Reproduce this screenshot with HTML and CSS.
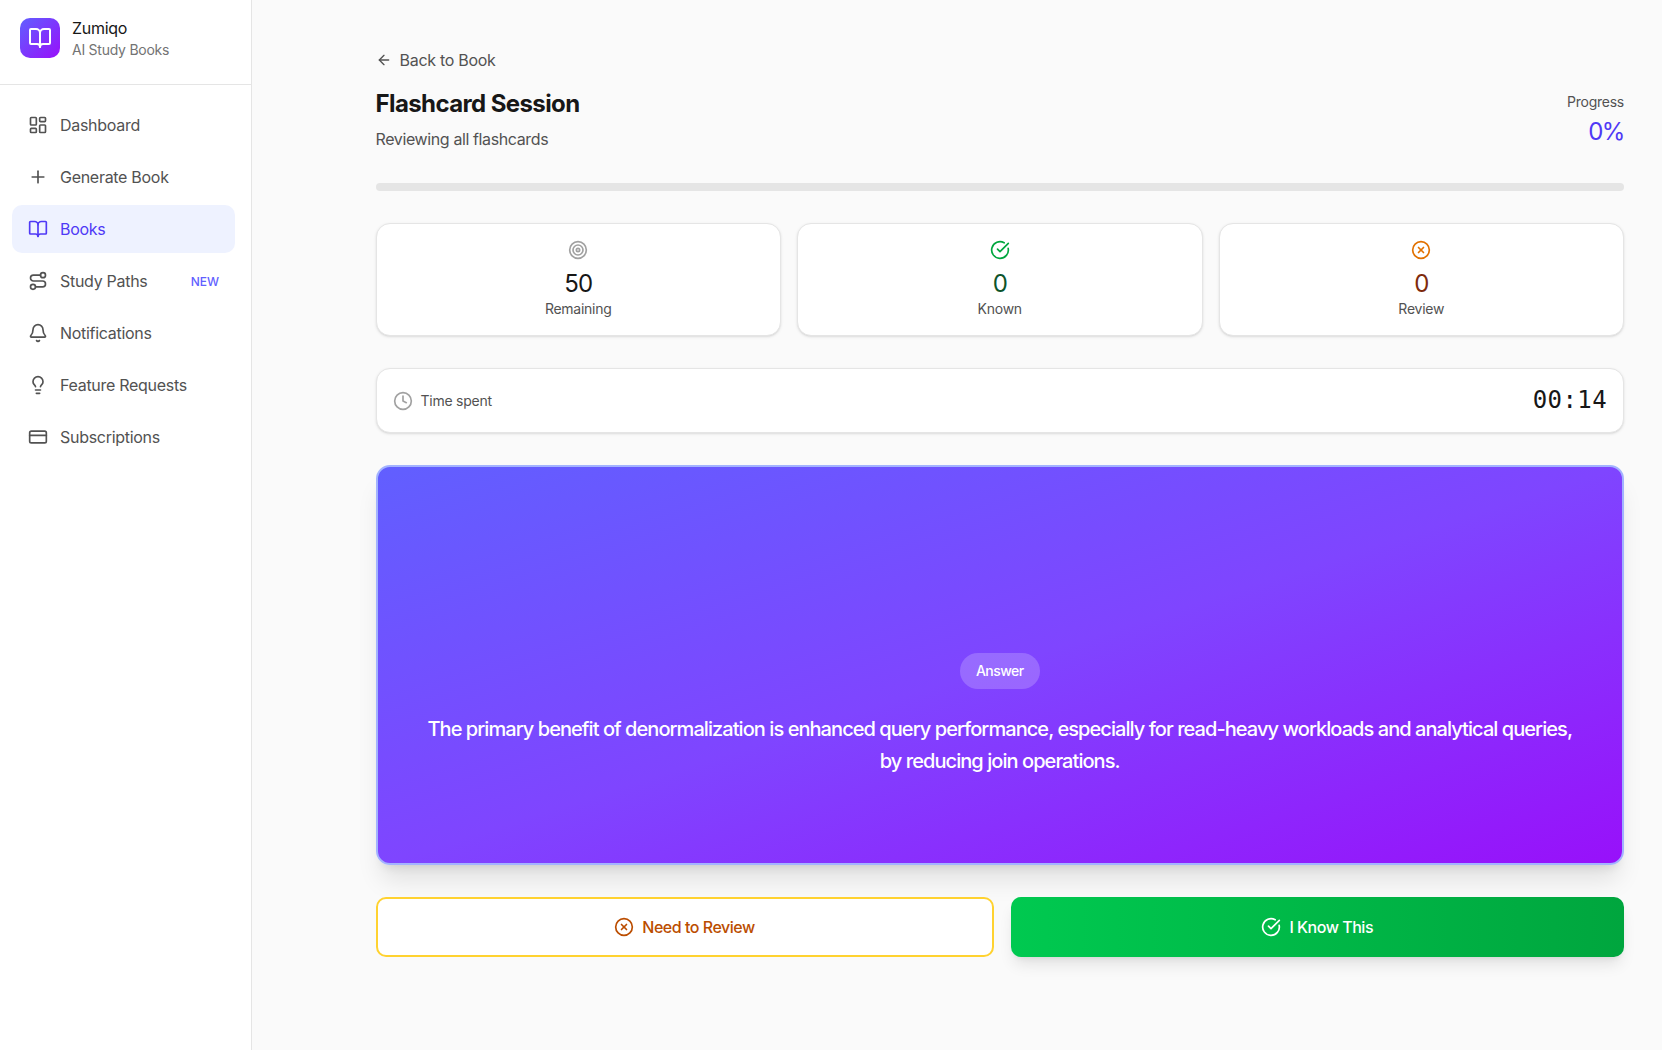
FILE: index.html
```html
<!DOCTYPE html>
<html lang="en">
<head>
    <meta charset="UTF-8">
    <meta name="viewport" content="width=device-width, initial-scale=1.0">
    <title>Flashcard Session | Zumiqo</title>
    <link rel="stylesheet" href="styles.css">
</head>
<body>
    <div class="app">
        <aside class="sidebar">
            <div class="brand">
                <div class="brand-logo">
                    <svg class="icon icon-logo" viewBox="0 0 24 24"><path d="M12 7v14"/><path d="M3 18a1 1 0 0 1-1-1V4a1 1 0 0 1 1-1h5a4 4 0 0 1 4 4 4 4 0 0 1 4-4h5a1 1 0 0 1 1 1v13a1 1 0 0 1-1 1h-6a3 3 0 0 0-3 3 3 3 0 0 0-3-3z"/></svg>
                </div>
                <div>
                    <div class="brand-name">Zumiqo</div>
                    <div class="brand-sub">AI Study Books</div>
                </div>
            </div>
            <nav class="nav">
                <a class="nav-item">
                    <svg class="icon" viewBox="0 0 24 24"><rect x="3" y="3" width="7" height="9" rx="1"/><rect x="14" y="3" width="7" height="5" rx="1"/><rect x="14" y="12" width="7" height="9" rx="1"/><rect x="3" y="16" width="7" height="5" rx="1"/></svg>
                    <span>Dashboard</span>
                </a>
                <a class="nav-item">
                    <svg class="icon" viewBox="0 0 24 24"><path d="M5 12h14"/><path d="M12 5v14"/></svg>
                    <span>Generate Book</span>
                </a>
                <a class="nav-item active">
                    <svg class="icon" viewBox="0 0 24 24"><path d="M12 7v14"/><path d="M3 18a1 1 0 0 1-1-1V4a1 1 0 0 1 1-1h5a4 4 0 0 1 4 4 4 4 0 0 1 4-4h5a1 1 0 0 1 1 1v13a1 1 0 0 1-1 1h-6a3 3 0 0 0-3 3 3 3 0 0 0-3-3z"/></svg>
                    <span>Books</span>
                </a>
                <a class="nav-item">
                    <svg class="icon" viewBox="0 0 24 24"><circle cx="6" cy="19" r="3"/><path d="M9 19h8.5a3.5 3.5 0 0 0 0-7h-11a3.5 3.5 0 0 1 0-7H15"/><circle cx="18" cy="5" r="3"/></svg>
                    <span>Study Paths</span>
                    <span class="nav-badge">NEW</span>
                </a>
                <a class="nav-item">
                    <svg class="icon" viewBox="0 0 24 24"><path d="M10.268 21a2 2 0 0 0 3.464 0"/><path d="M3.262 15.326A1 1 0 0 0 4 17h16a1 1 0 0 0 .74-1.673C19.41 13.956 18 12.499 18 8A6 6 0 0 0 6 8c0 4.499-1.411 5.956-2.738 7.326"/></svg>
                    <span>Notifications</span>
                </a>
                <a class="nav-item">
                    <svg class="icon" viewBox="0 0 24 24"><path d="M15 14c.2-1 .7-1.7 1.5-2.5 1-.9 1.5-2.2 1.5-3.5A6 6 0 0 0 6 8c0 1 .2 2.2 1.5 3.5.7.7 1.3 1.5 1.5 2.5"/><path d="M9 18h6"/><path d="M10 22h4"/></svg>
                    <span>Feature Requests</span>
                </a>
                <a class="nav-item">
                    <svg class="icon" viewBox="0 0 24 24"><rect x="2" y="5" width="20" height="14" rx="2"/><path d="M2 10h20"/></svg>
                    <span>Subscriptions</span>
                </a>
            </nav>
        </aside>

        <main class="main">
            <a class="back-link">
                <svg class="icon icon-back" viewBox="0 0 24 24"><path d="m12 19-7-7 7-7"/><path d="M19 12H5"/></svg>
                <span>Back to Book</span>
            </a>

            <div class="session-head">
                <div>
                    <h1>Flashcard Session</h1>
                    <p class="session-sub">Reviewing all flashcards</p>
                </div>
                <div class="progress-info">
                    <div class="progress-label">Progress</div>
                    <div class="progress-value">0%</div>
                </div>
            </div>

            <div class="progress-bar"></div>

            <div class="stats">
                <div class="stat-card">
                    <svg class="icon stat-icon muted" viewBox="0 0 24 24"><circle cx="12" cy="12" r="10"/><circle cx="12" cy="12" r="6"/><circle cx="12" cy="12" r="2"/></svg>
                    <div class="stat-value">50</div>
                    <div class="stat-label">Remaining</div>
                </div>
                <div class="stat-card">
                    <svg class="icon stat-icon green" viewBox="0 0 24 24"><path d="M21.801 10A10 10 0 1 1 17 3.335"/><path d="m9 11 3 3L22 4"/></svg>
                    <div class="stat-value green-dark">0</div>
                    <div class="stat-label">Known</div>
                </div>
                <div class="stat-card">
                    <svg class="icon stat-icon orange" viewBox="0 0 24 24"><circle cx="12" cy="12" r="10"/><path d="m15 9-6 6"/><path d="m9 9 6 6"/></svg>
                    <div class="stat-value orange-dark">0</div>
                    <div class="stat-label">Review</div>
                </div>
            </div>

            <div class="timer-card">
                <div class="timer-left">
                    <svg class="icon timer-icon muted" viewBox="0 0 24 24"><circle cx="12" cy="12" r="10"/><polyline points="12 6 12 12 16 14"/></svg>
                    <span>Time spent</span>
                </div>
                <div class="timer-value">00:14</div>
            </div>

            <div class="flashcard">
                <span class="flashcard-tag">Answer</span>
                <p class="flashcard-text">The primary benefit of denormalization is enhanced query performance, especially for read-heavy workloads and analytical queries, by reducing join operations.</p>
            </div>

            <div class="actions">
                <button class="btn btn-review">
                    <svg class="icon" viewBox="0 0 24 24"><circle cx="12" cy="12" r="10"/><path d="m15 9-6 6"/><path d="m9 9 6 6"/></svg>
                    Need to Review
                </button>
                <button class="btn btn-know">
                    <svg class="icon" viewBox="0 0 24 24"><path d="M21.801 10A10 10 0 1 1 17 3.335"/><path d="m9 11 3 3L22 4"/></svg>
                    I Know This
                </button>
            </div>
        </main>
    </div>
</body>
</html>
```

FILE: styles.css
```css
* {
    margin: 0;
    padding: 0;
    box-sizing: border-box;
    font-family: 'Inter', sans-serif;
    letter-spacing: -0.018em;
}

body {
    background-color: #fafafa;
    color: #171717;
    min-height: 100vh;
}

.app {
    display: flex;
    min-height: 100vh;
}

.icon {
    width: 20px;
    height: 20px;
    flex-shrink: 0;
    fill: none;
    stroke: currentColor;
    stroke-width: 2;
    stroke-linecap: round;
    stroke-linejoin: round;
}

/* sidebar */
.sidebar {
    width: 252px;
    flex-shrink: 0;
    background-color: #fff;
    border-right: 1px solid #e5e5e5;
}

.brand {
    height: 85px;
    display: flex;
    align-items: center;
    gap: 12px;
    padding: 0 20px 9px;
    border-bottom: 1px solid #e5e5e5;
}

.brand-logo {
    width: 40px;
    height: 40px;
    border-radius: 10px;
    display: flex;
    align-items: center;
    justify-content: center;
    color: #fff;
    background: linear-gradient(to bottom right, #615fff 0%, #9810fa 100%);
}

.icon-logo {
    width: 24px;
    height: 24px;
}

.brand-name {
    font-size: 16px;
    line-height: 24px;
}

.brand-sub {
    font-size: 14px;
    line-height: 20px;
    color: #737373;
}

.nav {
    display: flex;
    flex-direction: column;
    gap: 4px;
    padding: 16px 16px 16px 12px;
}

.nav-item {
    height: 48px;
    display: flex;
    align-items: center;
    gap: 12px;
    padding: 0 16px;
    border-radius: 10px;
    font-size: 16px;
    color: #525252;
}

.nav-item.active {
    background-color: #eef2ff;
    color: #4f39f6;
}

.nav-badge {
    margin-left: auto;
    font-size: 12px;
    font-weight: 500;
    letter-spacing: 0;
    color: #615fff;
}

/* main column */
.main {
    flex: 1;
    min-width: 0;
    padding: 48px 38px 48px 123.5px;
}

.back-link {
    display: flex;
    align-items: center;
    gap: 8px;
    font-size: 16px;
    line-height: 24px;
    color: #525252;
    margin-bottom: 16px;
}

.icon-back {
    width: 16px;
    height: 16px;
}

.session-head {
    display: flex;
    justify-content: space-between;
    margin-bottom: 32px;
}

h1 {
    font-size: 24px;
    line-height: 32px;
    font-weight: 700;
    letter-spacing: -0.025em;
    margin-bottom: 7px;
}

.session-sub {
    font-size: 16px;
    line-height: 24px;
    letter-spacing: -0.024em;
    color: #525252;
}

.progress-info {
    padding-top: 4px;
    text-align: right;
}

.progress-label {
    font-size: 14px;
    line-height: 20px;
    color: #525252;
    margin-bottom: 4px;
}

.progress-value {
    font-size: 24px;
    line-height: 32px;
    letter-spacing: -0.06em;
    color: #4f39f6;
}

.progress-bar {
    height: 8px;
    border-radius: 9999px;
    background-color: #e5e5e5;
    margin-bottom: 32px;
}

.stats {
    display: grid;
    grid-template-columns: repeat(3, 1fr);
    gap: 16px;
    margin-bottom: 32px;
}

.stat-card {
    display: flex;
    flex-direction: column;
    align-items: center;
    padding: 16px;
    background-color: #fff;
    border: 1px solid #e5e5e5;
    border-radius: 14px;
    box-shadow: 0 1px 3px rgba(0, 0, 0, 0.1), 0 1px 2px -1px rgba(0, 0, 0, 0.1);
}

.stat-icon {
    margin-bottom: 8px;
}

.muted {
    color: #a1a1a1;
}

.green {
    color: #00a63e;
}

.orange {
    color: #e17100;
}

.stat-value {
    font-size: 24px;
    line-height: 32px;
    letter-spacing: -0.04em;
}

.green-dark {
    color: #0d542b;
}

.orange-dark {
    color: #7e2a0c;
}

.stat-label {
    font-size: 14px;
    line-height: 20px;
    margin-top: -1px;
    color: #525252;
}

.timer-card {
    display: flex;
    align-items: center;
    justify-content: space-between;
    padding: 16px;
    background-color: #fff;
    border: 1px solid #e5e5e5;
    border-radius: 14px;
    box-shadow: 0 1px 3px rgba(0, 0, 0, 0.1), 0 1px 2px -1px rgba(0, 0, 0, 0.1);
    margin-bottom: 32px;
}

.timer-left {
    display: flex;
    align-items: center;
    gap: 8px;
    font-size: 14px;
    color: #525252;
}

.timer-value {
    font-family: 'DejaVu Sans Mono', monospace;
    font-size: 24px;
    line-height: 31px;
    letter-spacing: 0.4px;
}

.flashcard {
    height: 400px;
    display: flex;
    flex-direction: column;
    align-items: center;
    justify-content: center;
    gap: 24px;
    padding: 132px 48px 32px;
    color: #fff;
    text-align: center;
    background: linear-gradient(to bottom right, #615fff 0%, #7f45ff 50%, #9810fa 100%);
    background-origin: border-box;
    border: 2px solid #a3b3ff;
    border-radius: 14px;
    box-shadow: 0 20px 25px -5px rgba(0, 0, 0, 0.1), 0 8px 10px -6px rgba(0, 0, 0, 0.1);
    margin-bottom: 32px;
}

.flashcard-tag {
    padding: 8px 16px;
    font-size: 14px;
    line-height: 20px;
    font-weight: 500;
    letter-spacing: -0.04em;
    border-radius: 9999px;
    background-color: rgba(255, 255, 255, 0.2);
}

.flashcard-text {
    font-size: 20px;
    line-height: 32px;
    font-weight: 500;
    letter-spacing: -0.047em;
}

.actions {
    display: grid;
    grid-template-columns: 618px 1fr;
    gap: 17px;
}

.btn {
    height: 60px;
    display: flex;
    align-items: center;
    justify-content: center;
    gap: 8px;
    font-size: 16px;
    font-weight: 500;
    letter-spacing: -0.03em;
    border-radius: 10px;
    cursor: pointer;
}

.btn-review {
    background-color: #fff;
    color: #bb4d00;
    border: 2px solid #ffd230;
}

.btn-know {
    border: none;
    color: #fff;
    background: linear-gradient(to right, #00c950 0%, #00a63e 100%);
    box-shadow: 0 10px 15px -3px rgba(0, 0, 0, 0.1), 0 4px 6px -4px rgba(0, 0, 0, 0.1);
}
```
